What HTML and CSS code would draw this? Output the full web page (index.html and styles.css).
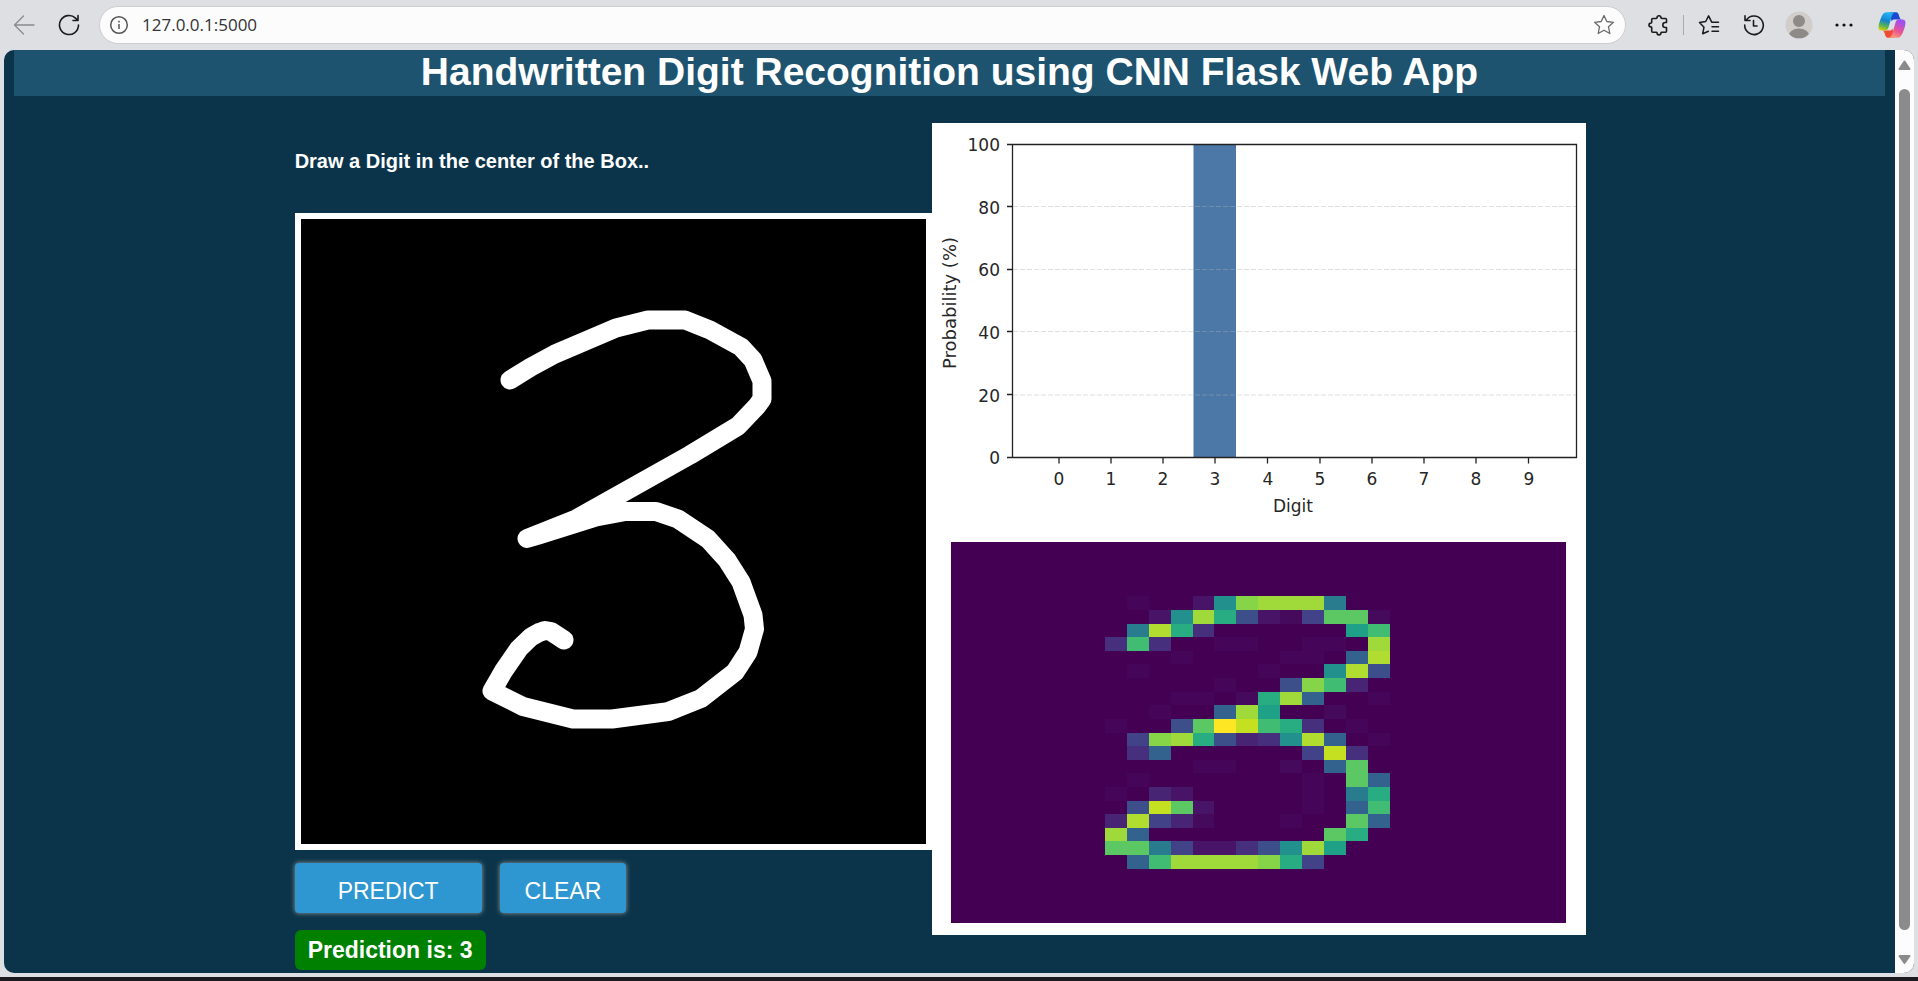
FILE: index.html
```html
<!DOCTYPE html>
<html lang="en">
<head>
<meta charset="utf-8">
<title>Handwritten Digit Recognition</title>
<link rel="stylesheet" href="styles.css">
</head>
<body>
<header class="toolbar">
  <div class="nav">
    <button class="tool" aria-label="Back"><svg width="22" height="22" viewBox="0 0 22 22" fill="none" stroke="#8b8b8e" stroke-width="1.3" stroke-linecap="round" stroke-linejoin="round"><path d="M21 11H1.500M10.500 2L1.500 11l9 9"/></svg></button>
    <button class="tool" aria-label="Reload"><svg width="22" height="22" viewBox="0 0 22 22" fill="none" stroke="#1b1b1b" stroke-width="1.6" stroke-linecap="round" stroke-linejoin="round"><path d="M20.500 11A9.500 9.500 0 1 1 17.500 4.100L19.800 6.300M20 1.500V6.500H15"/></svg></button>
  </div>
  <div class="address">
    <svg width="20" height="20" viewBox="0 0 20 20" fill="none" stroke="#555" stroke-width="1.500"><circle cx="10" cy="10" r="8.300"/><path d="M10 9v5M10 5.800v1.700"/></svg>
    <input class="url" type="text" value="127.0.0.1:5000" aria-label="Address">
    <button class="favorite" aria-label="Add to favorites"><svg width="22" height="22" viewBox="0 0 22 22" fill="none" stroke="#6b6b6b" stroke-width="1.300" stroke-linejoin="round"><path d="M11 1.500l2.800 6 6.600.8-4.900 4.500 1.300 6.700L11 16.200l-5.800 3.300 1.300-6.700L1.600 8.300l6.600-.8z"/></svg></button>
  </div>
  <div class="tools">
    <button class="tool" aria-label="Extensions"><svg width="22" height="22" viewBox="0 0 22 22" fill="none" stroke="#1b1b1b" stroke-width="1.600" stroke-linejoin="round"><path d="M4.700 4.500H8.200c.5 0 .8-.3.9-.8a1.900 1.900 0 0 1 3.800 0c.1.500.4.800.9.800h3.700a1 1 0 0 1 1 1V8.500h-1.200a2.500 2.500 0 0 0 0 5h1.200v3.700a1 1 0 0 1-1 1h-3.700c-.5 0-.8.300-.9.800a1.900 1.900 0 0 1-3.800 0c-.1-.5-.4-.8-.9-.8H4.700a1 1 0 0 1-1-1v-3.400c0-.5-.3-.8-.8-.9a1.900 1.900 0 0 1 0-3.800c.5-.1.8-.4.8-.9V5.500a1 1 0 0 1 1-1z"/></svg></button>
    <span class="divider"></span>
    <button class="tool" aria-label="Favorites"><svg width="22" height="22" viewBox="0 0 22 22" fill="none" stroke="#1b1b1b" stroke-width="1.500" stroke-linecap="round" stroke-linejoin="round"><path d="M20.500 8.200H13.700L10.600 1.900 7.700 7.500 1.500 8.400 6 13.200 4.700 19.800 10.400 17.200M14 12.700h6.500M14 17.200h6.500"/></svg></button>
    <button class="tool" aria-label="History"><svg width="22" height="22" viewBox="0 0 22 22" fill="none" stroke="#1b1b1b" stroke-width="1.600" stroke-linecap="round" stroke-linejoin="round"><path d="M3.200 6.200A9.300 9.300 0 1 1 1.700 11M2 1.800V6.500H7M10.500 6.500V12H14"/></svg></button>
    <button class="tool" aria-label="Profile"><svg width="28" height="28" viewBox="0 0 28 28"><defs><clipPath id="face"><circle cx="14" cy="14" r="13.300"/></clipPath></defs><circle cx="14" cy="14" r="13.500" fill="#d0cdca"/><circle cx="14" cy="10" r="6" fill="#8e8a87"/><ellipse cx="14" cy="25.500" rx="10.500" ry="8" fill="#8e8a87" clip-path="url(#face)"/></svg></button>
    <button class="tool" aria-label="More"><svg width="18" height="4" viewBox="0 0 18 4" fill="#111"><circle cx="2" cy="2" r="1.600"/><circle cx="9" cy="2" r="1.600"/><circle cx="16" cy="2" r="1.600"/></svg></button>
    <button class="tool copilot" aria-label="Copilot"><svg width="28" height="26" viewBox="0 0 28 26">
      <defs>
        <linearGradient id="cool" x1=".3" y1="0" x2="0" y2="1"><stop offset="0" stop-color="#1fb0f0"/><stop offset=".4" stop-color="#1683d0"/><stop offset=".7" stop-color="#5db648"/><stop offset="1" stop-color="#ffd400"/></linearGradient>
        <linearGradient id="warm" x1=".4" y1="0" x2="0" y2="1"><stop offset="0" stop-color="#a04ff0"/><stop offset=".5" stop-color="#ea5590"/><stop offset="1" stop-color="#ffb070"/></linearGradient>
      </defs>
      <path d="M12 .2h6c2 0 2.600 1.800 3.300 4.200.6 2 1.200 2.900 3 3H16.500c-1.500 0-2.300.6-3 2z" fill="#1a49d0"/>
      <path d="M16 25.800h-6c-2 0-2.600-1.800-3.300-4.200-.6-2-1.200-2.900-3-3h7.800c1.500 0 2.300-.6 3-2z" fill="#ef4b35"/>
      <path d="M18 .2H8.500C5.500.2 4 3 2.400 7.500c-1.800 5-3.600 11.100 1.100 11.100h3.400c2 0 3-1.200 3.600-3.200L13.800 4C14.500 1.600 15.800.2 18 .2z" fill="url(#cool)"/>
      <path d="M10 25.800h9.500c3 0 4.500-2.800 6.100-7.300 1.800-5 3.600-11.100-1.100-11.100h-3.400c-2 0-3 1.200-3.600 3.200L14.200 22c-.7 2.400-2 3.800-4.200 3.800z" fill="url(#warm)"/>
    </svg></button>
  </div>
</header>

<div class="viewport">
  <main class="app">
    <h1 class="banner">Handwritten Digit Recognition using CNN Flask Web App</h1>
    <div class="columns">
      <section class="draw">
        <h2 class="hint">Draw a Digit in the center of the Box..</h2>
        <svg class="pad" viewBox="0 0 625 625" role="img" aria-label="Drawing area">
          <polyline points="209,161 230,148 254,135 315,109 347,101 384,101 409,111 440,128 452,141 461,162 461,180 456,187 437,207 389,236 275,300 226,319.500 238,316 295,298 323,292.600 355,292.600 377,300 407,320 426,341 440,363 452,396 453.500,410 447,433 434,453 400,479.500 367,492.600 311,500 272,500 222,487.500 191,472 202.500,452 218,429.500 230,418 238,413.500 244,411.500 250,412.500 263,421"/>
        </svg>
        <div class="actions">
          <button class="btn btn-wide" type="button">PREDICT</button>
          <button class="btn" type="button">CLEAR</button>
        </div>
        <p class="result">Prediction is: 3</p>
      </section>

      <section class="report">
        <svg class="chart" viewBox="0 0 654 404" role="img" aria-label="Probability by digit">
          <rect x="261.500" y="22" width="42.500" height="312" fill="#4c78a8"/>
          <path class="grid" d="M81 83.500H644M81 146.500H644M81 208.500H644M81 272H644"/>
          <path class="axis" d="M75 21.500H644.500V334.500H75M80.500 21.500V334.500M75 83.500h5.500M75 146.500h5.500M75 208.500h5.500M75 271.500h5.500M127 334.500v6M179 334.500v6M231 334.500v6M283 334.500v6M335.500 334.500v6M388 334.500v6M440 334.500v6M492 334.500v6M544 334.500v6M596.500 334.500v6"/>
          <g class="tick tick-y"><text x="68" y="28">100</text><text x="68" y="91">80</text><text x="68" y="153">60</text><text x="68" y="216">40</text><text x="68" y="279">20</text><text x="68" y="341">0</text></g>
          <g class="tick"><text x="127" y="362">0</text><text x="179" y="362">1</text><text x="231" y="362">2</text><text x="283" y="362">3</text><text x="336" y="362">4</text><text x="388" y="362">5</text><text x="440" y="362">6</text><text x="492" y="362">7</text><text x="544" y="362">8</text><text x="597" y="362">9</text><text x="361" y="389">Digit</text></g>
          <text class="ylabel" transform="translate(24 180) rotate(-90)">Probability (%)</text>
        </svg>
        <svg class="heatmap" id="heatmap" viewBox="0 0 28 28" preserveAspectRatio="none" role="img" aria-label="Model input, 28 by 28"></svg>
      </section>
    </div>
  </main>
  <div class="scrollbar">
    <svg width="13" height="11" viewBox="0 0 13 11"><path d="M6.500 1.500L11.500 9h-10z" fill="#8b8b8b" stroke="#8b8b8b" stroke-width="2" stroke-linejoin="round"/></svg>
    <div class="thumb"></div>
    <svg width="13" height="11" viewBox="0 0 13 11"><path d="M6.500 9L1.500 2h10z" fill="#8b8b8b" stroke="#8b8b8b" stroke-width="2" stroke-linejoin="round"/></svg>
  </div>
</div>
<script src="heatmap.js"></script>
</body>
</html>
```

FILE: styles.css
```css
* { box-sizing: border-box; }

body {
  margin: 0;
  min-height: 100vh;
  display: flex;
  flex-direction: column;
  background: #dedfe3;
  border-bottom: 4px solid #1b1b1d;
  font-family: "Liberation Sans", Arial, sans-serif;
}

button { font: inherit; border: 0; padding: 0; background: none; }

/* Browser toolbar */
.toolbar { display: flex; align-items: center; padding: 6px 4px 6px 2px; }
.nav { display: flex; gap: 1px; padding-right: 8px; }
.tool { width: 45px; height: 38px; display: flex; align-items: center; justify-content: center; }
.nav .tool { width: 44px; }
.address {
  flex: 1;
  display: flex;
  align-items: center;
  height: 38px;
  padding: 0 10px 0 9px;
  background: #fcfcfc;
  border: 1px solid #cdcdd0;
  border-radius: 19px;
}
.url {
  flex: 1;
  margin-left: 13px;
  padding: 0 0 1px;
  border: 0;
  outline: 0;
  background: transparent;
  color: #333;
  font: 17px "Open Sans", "Noto Sans", sans-serif;
}
.favorite { display: flex; }
.tools { display: flex; align-items: center; padding-left: 10px; }
.divider { width: 1px; height: 20px; margin: 0 2px; background: #a9aaad; }
.copilot { margin-left: 3px; }

/* Page area */
.viewport {
  flex: 1;
  display: flex;
  margin: 0 4px 4px;
  border-radius: 10px;
  overflow: hidden;
  background: #0b344a;
}
.app { flex: 1; padding: 0 10px 3px; color: #fff; }
.banner {
  margin: 0;
  padding-bottom: 2px;
  background: #1d536f;
  font-size: 39px;
  line-height: 44px;
  text-align: center;
}
.columns { display: flex; align-items: flex-start; margin: 0 15%; padding-top: 27px; }
.draw { flex: none; }
.hint { margin: 27px 0 41px; font-size: 20px; line-height: 22px; }
.pad { display: block; width: 637px; height: 637px; border: 6px solid #fff; background: #000; }
.pad polyline {
  fill: none;
  stroke: #fff;
  stroke-width: 19;
  stroke-linecap: round;
  stroke-linejoin: round;
}
.actions { display: flex; gap: 18px; padding-top: 13px; }
.btn {
  height: 50px;
  padding: 6px 25px 0;
  border-radius: 4px;
  background: #2e97d1;
  box-shadow: 0 0 5px #999;
  color: #fff;
  font-size: 23px;
}
.btn-wide { padding: 6px 43px 0; }
.result {
  width: max-content;
  margin: 17px 0 0;
  padding: 0 13px;
  border-radius: 6px;
  background: #008000;
  font-size: 23px;
  font-weight: bold;
  line-height: 40px;
}

/* Model output */
.report { flex: 0 1 654px; padding-bottom: 12px; background: #fff; }
.chart { display: block; width: 100%; font-family: "DejaVu Sans", sans-serif; }
.chart text { fill: #262626; text-anchor: middle; }
.tick { font-size: 17px; }
.chart .tick-y text { text-anchor: end; }
.ylabel { font-size: 18px; }
.axis { fill: none; stroke: #222; stroke-width: 1.3; }
.grid { fill: none; stroke: #b0b0b0; stroke-opacity: .4; stroke-dasharray: 5 2; }
.heatmap { display: block; width: 94%; height: 381px; margin: 15px auto 0; background: #440154; }

.scrollbar {
  width: 19px;
  display: flex;
  flex-direction: column;
  align-items: center;
  padding: 10px 0 8px;
  background: #fcfcfc;
}
.thumb { flex: 1; width: 11px; margin: 18px 0 24px; border-radius: 6px; background: #8b8b8b; }
```

FILE: heatmap.js
```js
// Non-empty block of the 28x28 input; each letter is a step of the viridis scale.
var FIRST_ROW = 4;
var FIRST_COLUMN = 7;
var SCALE = {
  s: "#450558", a: "#460a5d", b: "#481467", c: "#482475", d: "#46307e",
  e: "#414287", f: "#3c4f8a", g: "#32628d", h: "#297b8e", i: "#22908c",
  j: "#1fa187", k: "#27ad81", l: "#40bd72", m: "#5cc863", n: "#86d549",
  o: "#9fda3a", p: "#b0dd2f", q: "#c5e021", r: "#fde725"
};
var ROWS = [
  ".s..binoooh..",
  "..biokfbaemma",
  ".hpkd......jl",
  "dld..ss..ss.o",
  "...s....ss.gp",
  ".s.....s..ipf",
  ".....s..fnlc.",
  "...ss.akog..s",
  "..s..goj..a..",
  "s..fmrqlkd.s.",
  ".enokfcdipg.s",
  ".dg......eqd.",
  "....ss..a.gm.",
  ".s.......s.mg",
  "s.cb.....s.hk",
  ".fqmb....s.gl",
  "cpeca...s..mg",
  "og........mk.",
  "mmhebbdfioj..",
  ".gloooonke..."
];
var map = document.getElementById("heatmap");
ROWS.forEach(function (row, y) {
  row.split("").forEach(function (step, x) {
    if (!SCALE[step]) return;
    var cell = document.createElementNS("http://www.w3.org/2000/svg", "rect");
    cell.setAttribute("x", FIRST_COLUMN + x);
    cell.setAttribute("y", FIRST_ROW + y);
    cell.setAttribute("width", 1);
    cell.setAttribute("height", 1);
    cell.setAttribute("fill", SCALE[step]);
    cell.setAttribute("shape-rendering", "crispEdges");
    map.appendChild(cell);
  });
});
```
